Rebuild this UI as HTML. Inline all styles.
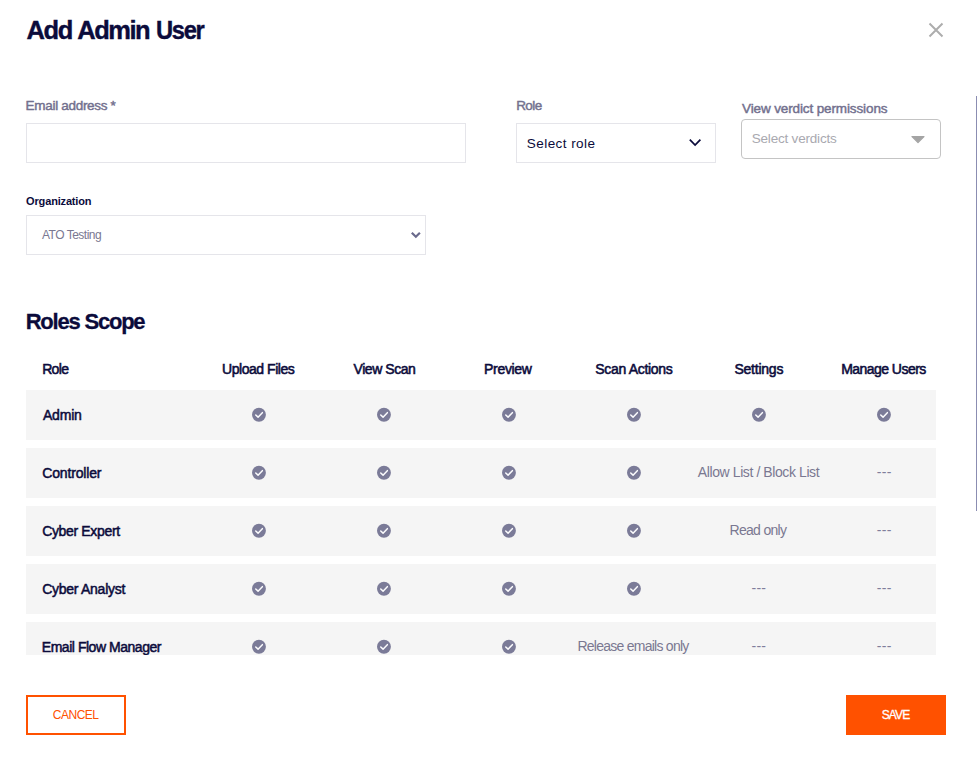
<!DOCTYPE html>
<html lang="en">
<head>
<meta charset="utf-8">
<title>Add Admin User</title>
<style>
*{box-sizing:border-box;margin:0;padding:0}
html,body{width:977px;height:757px;overflow:hidden;background:#fff}
body{position:relative;font-family:"Liberation Sans",sans-serif;color:#0b0b3b}
.t{position:absolute;white-space:nowrap;line-height:1}
.box{position:absolute;border:1px solid #e5e5ea;background:#fff}
.row{position:absolute;left:26px;width:910px;height:50px;background:#f5f5f5}
.hd{font-size:14px;color:#0b0b3b;-webkit-text-stroke:0.55px #0b0b3b}
.rn{font-size:14px;color:#0b0b3b;-webkit-text-stroke:0.5px #0b0b3b}
.ck{position:absolute;width:16px;height:16px;margin-left:-8px;margin-top:-8px}
.gr{font-size:14px;color:#7a7891}
.da{font-size:14px;color:#807e9c}
.lbl{font-size:13.5px;font-weight:normal;color:#72708e;-webkit-text-stroke:0.45px #72708e}
</style>
</head>
<body>
<svg width="0" height="0" style="position:absolute">
<defs>
<symbol id="ck" viewBox="0 0 16 16"><circle cx="7.95" cy="7.75" r="6.95" fill="#7b7b98"/><path d="M4.75 8 L7.05 10.15 L11.35 5.65" fill="none" stroke="#fbfbfd" stroke-width="1.5" stroke-linecap="round" stroke-linejoin="round"/></symbol>
</defs>
</svg>

<div class="t" id="title" style="left:0;top:18px;width:300px;height:26px;font-size:25.5px;font-weight:bold;-webkit-text-stroke:0.4px #0b0b3b"><span class="t" id="tw1" style="left:26.41px;top:0px;letter-spacing:-1.375px">Add</span> <span class="t" id="tw2" style="left:77.31px;top:0px;letter-spacing:-1.497px">Admin</span> <span class="t" id="tw3" style="left:155.56px;top:0px;transform:scaleX(0.93);transform-origin:0 0;letter-spacing:-1.416px">User</span></div>
<svg id="close" style="position:absolute;left:927px;top:21px" width="18" height="18" viewBox="0 0 18 18"><path d="M2.5 2.5 L15.5 15.5 M15.5 2.5 L2.5 15.5" stroke="#adadad" stroke-width="2" fill="none"/></svg>

<div class="t lbl" id="l-email" style="left:25.61px;top:98.6px;letter-spacing:-0.307px">Email address *</div>
<div class="box" style="left:26px;top:123px;width:440px;height:40px"></div>

<div class="t lbl" id="l-role" style="left:516.16px;top:98.6px;letter-spacing:-0.564px">Role</div>
<div class="box" style="left:516px;top:123px;width:200px;height:40px"></div>
<div class="t" id="selrole" style="left:526.86px;top:137px;font-size:13.5px;color:#0b0b3b;letter-spacing:0.430px">Select role</div>
<svg style="position:absolute;left:687px;top:137px" width="16" height="12" viewBox="0 0 16 12"><path d="M2.8 2.6 L8.1 8 L13.4 2.6" stroke="#0b0b3b" stroke-width="1.75" fill="none" stroke-linejoin="miter"/></svg>

<div class="t lbl" id="l-verd" style="left:742.06px;top:102px;letter-spacing:-0.123px">View verdict permissions</div>
<div class="box" style="left:741px;top:119px;width:200px;height:40px;border-color:#c4c4c4;border-radius:4px"></div>
<div class="t" id="selverd" style="left:751.71px;top:132px;font-size:13.5px;color:#a9a9b0;letter-spacing:-0.193px">Select verdicts</div>
<svg style="position:absolute;left:910px;top:135px" width="16" height="9" viewBox="0 0 16 9"><path d="M2 1.5 L14 1.5 L8 7.6 Z" fill="#a4a4a4" stroke="#a4a4a4" stroke-width="1.2" stroke-linejoin="round"/></svg>

<div class="t" id="l-org" style="left:26.11px;top:196px;font-size:11px;font-weight:bold;color:#0b0b3b;letter-spacing:-0.164px">Organization</div>
<div class="box" style="left:26px;top:215px;width:400px;height:40px"></div>
<div class="t" id="ato" style="left:42.00px;top:229px;font-size:12px;color:#7a7891;letter-spacing:-0.500px">ATO Testing</div>
<svg style="position:absolute;left:410px;top:231px" width="12" height="9" viewBox="0 0 12 9"><path d="M1.8 1.7 L5.85 5.75 L9.9 1.7" stroke="#6a6a8c" stroke-width="2.2" fill="none" stroke-linejoin="miter"/></svg>

<div class="t" id="rs" style="left:25.66px;top:311px;font-size:22px;font-weight:bold;-webkit-text-stroke:0.3px #0b0b3b;letter-spacing:-1.210px">Roles Scope</div>

<div class="t hd" id="h0" style="left:42.16px;top:362px;letter-spacing:-0.667px">Role</div>
<div class="t hd" id="h1" style="left:222.11px;top:362px;letter-spacing:-0.472px">Upload Files</div>
<div class="t hd" id="h2" style="left:353.56px;top:362px;letter-spacing:-0.455px">View Scan</div>
<div class="t hd" id="h3" style="left:484.11px;top:362px;letter-spacing:-0.327px">Preview</div>
<div class="t hd" id="h4" style="left:595.25px;top:362px;letter-spacing:-0.318px">Scan Actions</div>
<div class="t hd" id="h5" style="left:734.46px;top:362px;letter-spacing:-0.230px">Settings</div>
<div class="t hd" id="h6" style="left:841.16px;top:362px;letter-spacing:-0.540px">Manage Users</div>

<div class="row" style="top:390px"></div>
<div class="row" style="top:448px"></div>
<div class="row" style="top:506px"></div>
<div class="row" style="top:564px"></div>
<div class="row" style="top:622px;height:33px"></div>

<div class="t rn" id="r1" style="left:42.96px;top:408px;letter-spacing:-0.188px">Admin</div>
<div class="t rn" id="r2" style="left:42.21px;top:466px;letter-spacing:-0.154px">Controller</div>
<div class="t rn" id="r3" style="left:42.21px;top:524px;letter-spacing:-0.347px">Cyber Expert</div>
<div class="t rn" id="r4" style="left:42.21px;top:582px;letter-spacing:-0.271px">Cyber Analyst</div>
<div class="t rn" id="r5" style="left:41.81px;top:640px;letter-spacing:-0.467px">Email Flow Manager</div>

<svg class="ck" style="left:259px;top:415px"><use href="#ck"/></svg>
<svg class="ck" style="left:384px;top:415px"><use href="#ck"/></svg>
<svg class="ck" style="left:509px;top:415px"><use href="#ck"/></svg>
<svg class="ck" style="left:634px;top:415px"><use href="#ck"/></svg>
<svg class="ck" style="left:759px;top:415px"><use href="#ck"/></svg>
<svg class="ck" style="left:884px;top:415px"><use href="#ck"/></svg>

<svg class="ck" style="left:259px;top:473px"><use href="#ck"/></svg>
<svg class="ck" style="left:384px;top:473px"><use href="#ck"/></svg>
<svg class="ck" style="left:509px;top:473px"><use href="#ck"/></svg>
<svg class="ck" style="left:634px;top:473px"><use href="#ck"/></svg>

<svg class="ck" style="left:259px;top:531px"><use href="#ck"/></svg>
<svg class="ck" style="left:384px;top:531px"><use href="#ck"/></svg>
<svg class="ck" style="left:509px;top:531px"><use href="#ck"/></svg>
<svg class="ck" style="left:634px;top:531px"><use href="#ck"/></svg>

<svg class="ck" style="left:259px;top:589px"><use href="#ck"/></svg>
<svg class="ck" style="left:384px;top:589px"><use href="#ck"/></svg>
<svg class="ck" style="left:509px;top:589px"><use href="#ck"/></svg>
<svg class="ck" style="left:634px;top:589px"><use href="#ck"/></svg>

<svg class="ck" style="left:259px;top:647px"><use href="#ck"/></svg>
<svg class="ck" style="left:384px;top:647px"><use href="#ck"/></svg>
<svg class="ck" style="left:509px;top:647px"><use href="#ck"/></svg>


<div class="t gr" id="g1" style="left:697.86px;top:465px;letter-spacing:-0.409px">Allow List / Block List</div>
<div class="t gr" id="g2" style="left:729.56px;top:523px;letter-spacing:-0.703px">Read only</div>
<div class="t gr" id="g3" style="left:577.41px;top:639px;letter-spacing:-0.743px">Release emails only</div>
<div class="t da" id="d1" style="left:876.71px;top:465px;letter-spacing:0.325px">---</div>
<div class="t da" id="d2" style="left:876.71px;top:523px;letter-spacing:0.325px">---</div>
<div class="t da" id="d3" style="left:751.56px;top:581px;letter-spacing:0.175px">---</div>
<div class="t da" id="d4" style="left:876.71px;top:581px;letter-spacing:0.325px">---</div>
<div class="t da" id="d5" style="left:751.56px;top:639px;letter-spacing:0.175px">---</div>
<div class="t da" id="d6" style="left:876.71px;top:639px;letter-spacing:0.325px">---</div>

<!-- mask below table -->
<div style="position:absolute;left:0;top:655px;width:977px;height:102px;background:#fff"></div>

<div class="box" style="left:26px;top:695px;width:100px;height:40px;border:2px solid #ff5100"></div>
<div class="t" id="cancel" style="left:52.86px;top:709px;font-size:12px;color:#ff5100;letter-spacing:-0.510px">CANCEL</div>
<div style="position:absolute;left:846px;top:695px;width:100px;height:40px;background:#ff5100"></div>
<div class="t" id="save" style="left:881.71px;top:709px;font-size:12px;color:#fff;-webkit-text-stroke:0.3px #fff;letter-spacing:-0.886px">SAVE</div>

<!-- scrollbar -->
<div style="position:absolute;left:976px;top:96px;width:1px;height:415px;background:#8b8db2"></div>
</body>
</html>
